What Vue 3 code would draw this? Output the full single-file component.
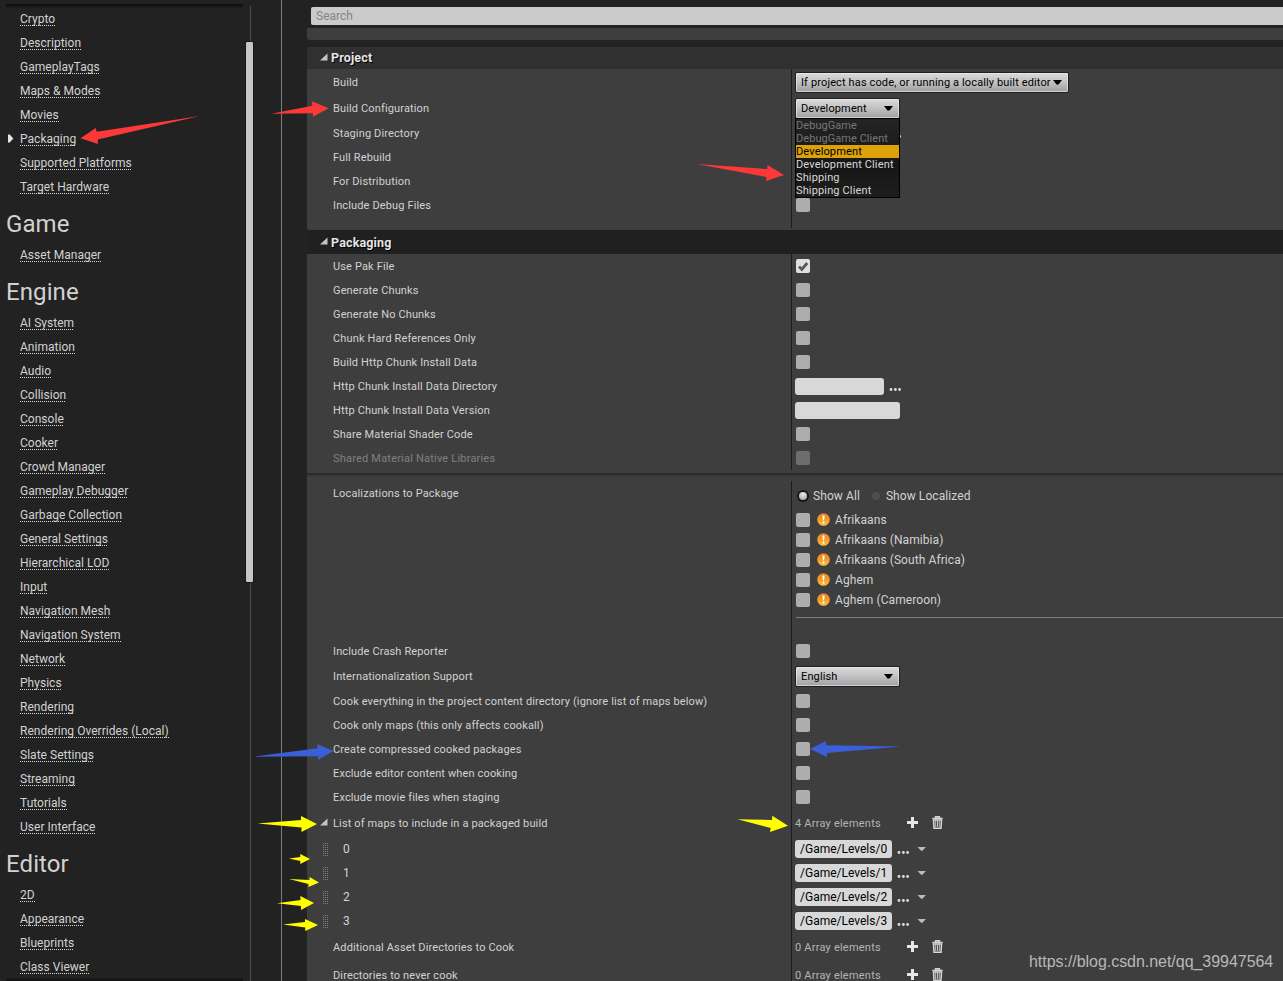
<template>
  <div class="settings">
    <aside class="sidebar">
      <nav class="nav">
        <template v-for="group in groups" :key="group.title">
          <h2 v-if="group.title" class="nav-title">{{ group.title }}</h2>
          <div v-for="item in group.items" :key="item" class="nav-row">
            <svg v-if="item === active" class="marker" width="6" height="9" viewBox="0 0 6 9"><path d="M0 0.5H1.7L5.3 4.5 1.7 8.5H0Z" /></svg>
            <a class="nav-link">{{ item }}</a>
          </div>
        </template>
      </nav>
      <div class="scrollbar"><div class="thumb"></div></div>
    </aside>

    <main class="details">
      <div class="search">Search</div>
      <div class="stub"></div>

      <section v-for="section in sections" :key="section.title" :class="['section', section.kind]">
        <header class="section-title">
          <svg class="expander" width="8" height="8" viewBox="0 0 8 8"><path d="M7.5 0.5V7.5H0Z" /></svg>
          <span>{{ section.title }}</span>
        </header>

        <template v-for="row in section.rows" :key="row.label">
          <div v-if="row.type === 'separator'" class="separator"></div>
          <div v-else :class="['row', `row-${row.type}`, { disabled: row.disabled }]">
            <div class="name">
              <svg v-if="row.open" class="expander" width="8" height="8" viewBox="0 0 8 8"><path d="M7.5 0.5V7.5H0Z" /></svg>
              <span v-if="row.type === 'path'" class="grip"></span>
              <span class="label">{{ row.label }}</span>
            </div>
            <div class="value">
              <span v-if="row.type === 'check'" :class="['check', { on: row.on }]">
                <svg v-if="row.on" width="14" height="14" viewBox="0 0 14 14"><path d="M3 7.6L5.8 10.4 11.2 4" /></svg>
              </span>

              <div v-else-if="row.type === 'combo'" :class="['combo', { wide: row.wide }]">
                <span>{{ row.value }}</span>
                <svg width="9" height="5" viewBox="0 0 9 5"><path d="M0 0H9L5.5 4.5H3.5Z" /></svg>
                <ul v-if="row.options" class="menu">
                  <li v-for="opt in row.options" :key="opt" :class="optionClass(opt, row.value)">{{ opt }}</li>
                </ul>
              </div>

              <template v-else-if="row.type === 'dir'">
                <span class="field short"></span>
                <svg class="dots" width="12" height="3" viewBox="0 0 12 3"><circle cx="2" cy="1.5" r="1.4" /><circle cx="6.4" cy="1.5" r="1.4" /><circle cx="10.6" cy="1.5" r="1.4" /></svg>
              </template>

              <span v-else-if="row.type === 'text'" class="field"></span>

              <template v-else-if="row.type === 'path'">
                <span class="field filled">{{ row.value }}</span>
                <svg class="dots" width="12" height="3" viewBox="0 0 12 3"><circle cx="2" cy="1.5" r="1.4" /><circle cx="6.4" cy="1.5" r="1.4" /><circle cx="10.6" cy="1.5" r="1.4" /></svg>
                <svg class="caret" width="9" height="5" viewBox="0 0 9 5"><path d="M0.5 0H9L4.8 4.3Z" /></svg>
              </template>

              <template v-else-if="row.type === 'array'">
                <span class="count">{{ row.count }} Array elements</span>
                <svg class="plus" width="11" height="11" viewBox="0 0 11 11"><path d="M4 0H7V4H11V7H7V11H4V7H0V4H4Z" /></svg>
                <svg class="trash" width="11" height="13" viewBox="0 0 11 13">
                  <path d="M0.3 2.6H10.7M3.6 2.2V0.8H7.4V2.2" />
                  <path d="M1.5 4L2 12.2H9L9.5 4Z" />
                  <path class="ribs" d="M3.7 4.5V11M5.5 4.5V11M7.3 4.5V11" />
                </svg>
              </template>

              <div v-else-if="row.type === 'cultures'" class="cultures">
                <div class="modes">
                  <span class="radio on"></span><span>Show All</span>
                  <span class="radio"></span><span>Show Localized</span>
                </div>
                <div v-for="c in cultures" :key="c" class="culture">
                  <span class="check"></span>
                  <svg class="warn" width="13" height="13" viewBox="0 0 13 13">
                    <defs>
                      <linearGradient id="amber" x1="0" y1="0" x2="0" y2="1">
                        <stop offset="0" stop-color="#e2852c" />
                        <stop offset="0.5" stop-color="#f59a20" />
                        <stop offset="1" stop-color="#ffc34a" />
                      </linearGradient>
                    </defs>
                    <circle cx="6.5" cy="6.5" r="6.3" fill="url(#amber)" />
                    <path d="M5.4 2.5H7.6L7.1 7.6H5.9Z" />
                    <circle cx="6.5" cy="9.6" r="1.1" />
                  </svg>
                  <span>{{ c }}</span>
                </div>
                <div class="rule"></div>
              </div>
            </div>
          </div>
        </template>
      </section>
    </main>

    <svg class="arrows" width="1283" height="981" viewBox="0 0 1283 981">
      <polygon v-for="(a, i) in arrows" :key="i" :points="a.points" :fill="a.color" />
    </svg>
    <div class="watermark">https://blog.csdn.net/qq_39947564</div>
  </div>
</template>

<script setup>
const active = 'Packaging'

const groups = [
  { title: '', items: ['Crypto', 'Description', 'GameplayTags', 'Maps & Modes', 'Movies', 'Packaging', 'Supported Platforms', 'Target Hardware'] },
  { title: 'Game', items: ['Asset Manager'] },
  {
    title: 'Engine',
    items: [
      'AI System', 'Animation', 'Audio', 'Collision', 'Console', 'Cooker', 'Crowd Manager',
      'Gameplay Debugger', 'Garbage Collection', 'General Settings', 'Hierarchical LOD', 'Input',
      'Navigation Mesh', 'Navigation System', 'Network', 'Physics', 'Rendering',
      'Rendering Overrides (Local)', 'Slate Settings', 'Streaming', 'Tutorials', 'User Interface'
    ]
  },
  { title: 'Editor', items: ['2D', 'Appearance', 'Blueprints', 'Class Viewer'] }
]

const configs = ['DebugGame', 'DebugGame Client', 'Development', 'Development Client', 'Shipping', 'Shipping Client']

const sections = [
  {
    title: 'Project',
    kind: 'project',
    rows: [
      { label: 'Build', type: 'combo', value: 'If project has code, or running a locally built editor', wide: true },
      { label: 'Build Configuration', type: 'combo', value: 'Development', options: configs },
      { label: 'Staging Directory', type: 'dir' },
      { label: 'Full Rebuild', type: 'check' },
      { label: 'For Distribution', type: 'check' },
      { label: 'Include Debug Files', type: 'check' },
      { label: '', type: 'filler' }
    ]
  },
  {
    title: 'Packaging',
    kind: 'packaging',
    rows: [
      { label: 'Use Pak File', type: 'check', on: true },
      { label: 'Generate Chunks', type: 'check' },
      { label: 'Generate No Chunks', type: 'check' },
      { label: 'Chunk Hard References Only', type: 'check' },
      { label: 'Build Http Chunk Install Data', type: 'check' },
      { label: 'Http Chunk Install Data Directory', type: 'dir' },
      { label: 'Http Chunk Install Data Version', type: 'text' },
      { label: 'Share Material Shader Code', type: 'check' },
      { label: 'Shared Material Native Libraries', type: 'check', disabled: true },
      { label: '-', type: 'separator' },
      { label: 'Localizations to Package', type: 'cultures' },
      { label: 'Include Crash Reporter', type: 'check' },
      { label: 'Internationalization Support', type: 'combo', value: 'English' },
      { label: 'Cook everything in the project content directory (ignore list of maps below)', type: 'check' },
      { label: 'Cook only maps (this only affects cookall)', type: 'check' },
      { label: 'Create compressed cooked packages', type: 'check' },
      { label: 'Exclude editor content when cooking', type: 'check' },
      { label: 'Exclude movie files when staging', type: 'check' },
      { label: 'List of maps to include in a packaged build', type: 'array', count: 4, open: true },
      { label: '0', type: 'path', value: '/Game/Levels/0' },
      { label: '1', type: 'path', value: '/Game/Levels/1' },
      { label: '2', type: 'path', value: '/Game/Levels/2' },
      { label: '3', type: 'path', value: '/Game/Levels/3' },
      { label: 'Additional Asset Directories to Cook', type: 'array', count: 0 },
      { label: 'Directories to never cook', type: 'array', count: 0 }
    ]
  }
]

const cultures = ['Afrikaans', 'Afrikaans (Namibia)', 'Afrikaans (South Africa)', 'Aghem', 'Aghem (Cameroon)']

const red = '#fc3838'
const blue = '#3a5fd9'
const yellow = '#ffff00'

const arrows = [
  { color: red, points: '80.5,138.3 95.7,128 96.7,131.7 200,116 97.7,139.5 98,144' },
  { color: red, points: '271,113.7 312.5,105.8 311.5,101 328.5,108.3 313,116.8 313,113.3' },
  { color: red, points: '696.5,164 767.3,169 767.5,165 784,175 766.3,181 766.3,177' },
  { color: blue, points: '256,756.3 317.7,748.3 317.3,744 333.5,751 318,760 318,756.3 256,756.8' },
  { color: blue, points: '901,746.5 826,745.2 826,741 810,749 827,757 827,753' },
  { color: yellow, points: '257.5,823.5 301,820 301,816 317,824 301.5,832 301.5,827.5' },
  { color: yellow, points: '289,858.5 300.3,857 300.3,854 310,859 300.3,864 300.3,861' },
  { color: yellow, points: '289,879 309.5,880 309.5,877 319,882.5 308.5,887 308.5,884' },
  { color: yellow, points: '277,903.3 300.5,900 300.3,896 314,903 301,910 301,906' },
  { color: yellow, points: '283,924.5 305,922 305,919 318,925 305.3,931 305.3,927.5' },
  { color: yellow, points: '737.5,819.2 772,820 772.3,815.7 788,825.7 770,832 770.7,828' }
]

function optionClass(opt, value) {
  return { selected: opt === value, off: opt.startsWith('DebugGame') }
}
</script>

<style>
body { background: #222; overflow: hidden; }
</style>

<style scoped>
.settings {
  position: relative;
  display: flex;
  width: 1283px;
  height: 981px;
  overflow: hidden;
  background: #222;
  color: #d2d2d2;
  font-family: Roboto, sans-serif;
  font-size: 11px;
  white-space: nowrap;
}

.sidebar {
  display: flex;
  box-sizing: border-box;
  width: 282px;
  flex: none;
  border-right: 1px solid #7b7b7b;
}
.nav {
  box-sizing: border-box;
  width: 237px;
  height: 977px;
  margin: 4px 3px 0 6px;
  padding-top: 3px;
  overflow: hidden;
  background:
    linear-gradient(#0c0c0c, #222) 0 0 / 100% 5px no-repeat,
    linear-gradient(#222, #101010) 0 100% / 100% 4px no-repeat;
}
.nav-title {
  margin: 0;
  height: 44px;
  line-height: 50px;
  font-size: 24px;
  font-weight: 400;
  letter-spacing: 0.1px;
}
.nav-row { display: flex; height: 24px; align-items: center; position: relative; padding-left: 14px; }
.marker { position: absolute; left: 2px; top: 7px; fill: #e6e6e6; }
.nav-link {
  font-size: 12px;
  line-height: 24px;
  letter-spacing: 0.03px;
  background: repeating-linear-gradient(90deg, #d8d8d8 0 1px, transparent 1px 2px) 0 18px / 100% 1px no-repeat;
}
.scrollbar {
  width: 7px;
  height: 975px;
  margin-top: 6px;
  background: linear-gradient(#4c4c4c, #4c4c4c) 4px 0 / 1px 100% no-repeat;
}
.thumb {
  height: 540px;
  margin-top: 36px;
  border-radius: 1px;
  background: #c6c6c6;
  box-shadow: 0 0 0 1px #161616;
}

.details { flex: 1; min-width: 0; padding-left: 25px; }
.search {
  height: 18px;
  margin: 7px 0 3px 4px;
  padding-left: 5px;
  border-radius: 2px 0 0 2px;
  background: #cbcbcb;
  color: #858585;
  font-size: 12px;
  line-height: 18px;
}
.stub { height: 12px; margin-bottom: 7px; background: #3e3e3e; border-radius: 0 0 0 3px; }

.section { background: #3e3e3e; border-radius: 3px 0 0 3px; }
.section-title {
  display: flex;
  align-items: center;
  box-sizing: border-box;
  height: 22px;
  padding: 0 0 1px 13px;
  gap: 3px;
  border-radius: 3px 0 0 0;
  background: #303030;
  color: #e4e4e4;
  font-size: 12.5px;
  font-weight: 700;
  letter-spacing: 0.15px;
  line-height: 15px;
  text-shadow: 1px 1px 0 #000;
}
.packaging .section-title { height: 24px; padding-bottom: 0; background: #202020; }
.expander { flex: none; fill: #c4c4c4; }
.section-title .expander { margin-top: -2px; }

.row { display: flex; height: 24px; }
.row-combo { height: 26px; }
.row-array { height: 28px; }
.row-filler { height: 11px; padding-bottom: 2px; }
.row-cultures { height: 158px; }
.name { display: flex; align-items: center; width: 458px; padding-left: 26px; flex: none; letter-spacing: 0.14px; }
.row-cultures .name { align-items: flex-start; line-height: 25px; }
.row-array .expander { margin: -2px 5px 0 -13px; }
.value { display: flex; align-items: center; flex: 1; min-width: 0; padding-left: 3px; border-left: 1px solid #1c1c1c; }
.disabled .label { color: #808080; letter-spacing: 0.2px; }
.separator {
  height: 11px;
  background: linear-gradient(#262626, #3e3e3e) 0 3px / 100% 4px no-repeat;
}

.check { display: block; width: 14px; height: 14px; margin-left: 1px; border-radius: 2px; background: #adadad; flex: none; }
.check.on { background: #e0e0e0; }
.check svg { display: block; }
.check path { fill: none; stroke: #5a5a5a; stroke-width: 2.8; }
.disabled .check { background: #6d6d6d; }

.combo {
  position: relative;
  display: flex;
  align-items: center;
  justify-content: space-between;
  box-sizing: border-box;
  width: 105px;
  height: 21px;
  margin-top: 1px;
  padding: 0 6px 0 5px;
  border: 1px solid #202020;
  border-radius: 2px;
  background: linear-gradient(#dadada, #c4c4c4 45%, #a0a0a0);
  box-shadow: inset 0 0 0 1px rgba(240, 240, 240, 0.6);
  color: #000;
  letter-spacing: 0.13px;
}
.combo svg { flex: none; }
.combo.wide { width: 274px; }
.menu {
  position: absolute;
  left: -1px;
  top: 19px;
  z-index: 2;
  width: 103px;
  margin: 0;
  padding: 0;
  border: 1px solid #000;
  list-style: none;
  background: linear-gradient(#242424, #161616 60%, #1e1e1e);
  color: #d8d8d8;
}
.menu li { height: 13px; line-height: 13px; letter-spacing: 0.14px; }
.menu .off { color: #777; letter-spacing: 0.05px; }
.menu .selected { background: #dda20a; color: #000; }

.field { box-sizing: border-box; width: 105px; height: 17px; border-radius: 3px; background: #d8d8d8; }
.field.short { width: 89px; }
.field.filled { width: 97px; height: 18px; padding-left: 5px; color: #000; font-size: 12px; line-height: 18px; }
.dots { margin: 6px 0 0 5px; fill: #e0e0e0; }
.row-path .dots { margin-top: 7px; }
.caret { margin-left: 8px; fill: #bdbdbd; }

.grip {
  width: 5px;
  height: 13px;
  margin: 0 15px 0 -10px;
  background:
    repeating-linear-gradient(transparent 0 1px, #3e3e3e 1px 2px),
    repeating-linear-gradient(90deg, #7c7c7c 0 1px, transparent 1px 2px);
}
.row-path .label { font-size: 12px; }

.count { width: 112px; color: #b4b4b4; letter-spacing: 0.22px; }
.plus { fill: #e6e6e6; margin-top: -1px; }
.trash { margin: -1px 0 0 13.5px; fill: none; stroke: #d6d6d6; stroke-width: 1.5; }
.trash .ribs { stroke-width: 0.9; }

.row-cultures .value { align-items: flex-start; }
.cultures { flex: 1; font-size: 12px; letter-spacing: 0.08px; }
.modes { display: flex; align-items: center; height: 29px; }
.radio { width: 8px; height: 8px; margin: 0 6px 0 12px; border-radius: 50%; background: #544c4c; }
.radio.on {
  margin: 0 6px 0 4px;
  background: radial-gradient(circle at 50% 30%, #e8e8e8, #999);
  box-shadow: 0 0 0 2px #161616;
}
.culture { display: flex; align-items: center; height: 20px; }
.warn { margin: -1px 5px 0 7px; fill: #fff; }
.rule { height: 1px; margin: 7px 0 0 1px; background: #7d7d7d; }

.arrows { position: absolute; left: 0; top: 0; z-index: 3; }
.watermark {
  position: absolute;
  left: 1029px;
  top: 952px;
  font: 16px/19px "Liberation Sans", Arial, sans-serif;
  letter-spacing: -0.04px;
  color: #b8b8b8;
}
</style>
